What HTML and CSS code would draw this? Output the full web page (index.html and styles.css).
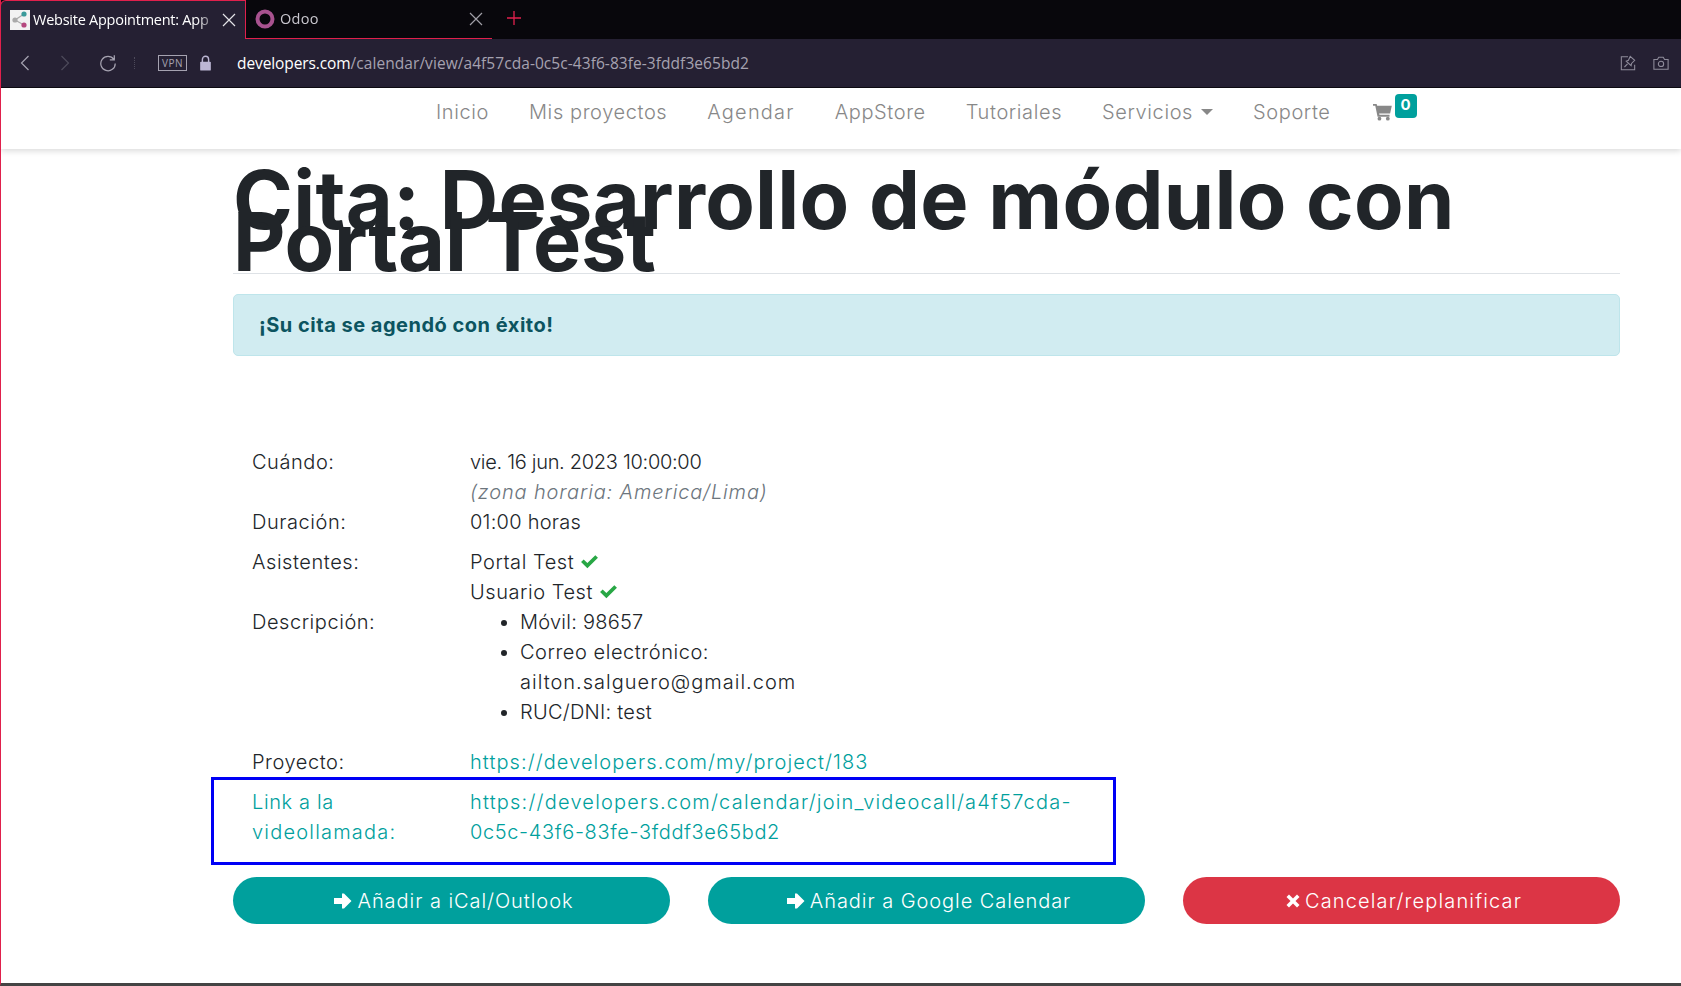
FILE: index.html
```html
<!DOCTYPE html>
<html>
<head>
    <meta charset="UTF-8">
    <title>Website Appointment</title>
    <link rel="stylesheet" href="styles.css">
</head>
<body>
    <div class="tabbar">
        <div class="tab active">
            <svg class="favicon" viewBox="0 0 20 20">
                <rect width="20" height="20" fill="#f2f2f2"/>
                <path d="M5 10 L14 4 M5 10 L14 15" stroke="#aaa" stroke-width="1.2"/>
                <circle cx="5" cy="10" r="2.6" fill="#aaa"/>
                <circle cx="14" cy="4" r="2.6" fill="#3a9a9a"/>
                <circle cx="14" cy="15" r="2.6" fill="#b5487f"/>
            </svg>
            <span class="tab-title">Website Appointment: App</span>
            <svg class="tab-close" viewBox="0 0 14 14"><path d="M1 1 L13 13 M13 1 L1 13"/></svg>
        </div>
        <div class="tab">
            <svg class="favicon" viewBox="0 0 20 20">
                <circle cx="10" cy="10" r="7.5" fill="none" stroke="#a8528f" stroke-width="4"/>
            </svg>
            <span class="tab-title dim">Odoo</span>
            <svg class="tab-close dim" viewBox="0 0 14 14"><path d="M1 1 L13 13 M13 1 L1 13"/></svg>
        </div>
        <svg class="new-tab" viewBox="0 0 16 16"><path d="M8 0 V16 M0 8 H16"/></svg>
    </div>

    <div class="toolbar">
        <svg class="tool-btn" viewBox="0 0 16 20"><path d="M12 2 L4 10 L12 18"/></svg>
        <svg class="tool-btn off" viewBox="0 0 16 20"><path d="M4 2 L12 10 L4 18"/></svg>
        <svg class="tool-btn reload" viewBox="0 0 20 20"><path d="M16.5 6 A8 8 0 1 0 18 10.5 M17 1.5 V6.5 H12"/></svg>
        <span class="tool-sep"></span>
        <span class="vpn">VPN</span>
        <svg class="lock" viewBox="0 0 14 18">
            <path d="M3.5 8 V5 A3.5 3.5 0 0 1 10.5 5 V8" fill="none" stroke="#bcb6d4" stroke-width="1.6"/>
            <rect x="1" y="7.5" width="12" height="10" rx="1" fill="#bcb6d4"/>
        </svg>
        <div class="url"><span class="host">developers.com</span>/calendar/view/a4f57cda-0c5c-43f6-83fe-3fddf3e65bd2</div>
        <svg class="tool-icon" viewBox="0 0 18 18">
            <path d="M9 2 H1.5 V16.5 H16.5 V11"/>
            <path d="M11.5 1.5 L16.5 6 L13 9.5 L12.5 12 L7 7 L9.5 6 Z M8.5 10 L5 13.5"/>
        </svg>
        <svg class="tool-icon" viewBox="0 0 18 16">
            <path d="M1 4 H5 L6.5 1.5 H11.5 L13 4 H17 V15 H1 Z"/>
            <circle cx="9" cy="9" r="3"/>
        </svg>
    </div>

    <nav class="navbar">
        <a class="nav-link">Inicio</a>
        <a class="nav-link">Mis proyectos</a>
        <a class="nav-link wide">Agendar</a>
        <a class="nav-link">AppStore</a>
        <a class="nav-link">Tutoriales</a>
        <a class="nav-link caret">Servicios</a>
        <a class="nav-link">Soporte</a>
        <a class="nav-link cart">
            <svg class="cart-icon" viewBox="0 0 20 18">
                <path d="M0 0.5 H3.8 L4.4 2.5 H19.8 L18 10.5 H6.4 L6.8 12 H17.4 V14 H4.8 L2.4 2.5 H0 Z"/>
                <circle cx="6.8" cy="16" r="2"/>
                <circle cx="15.6" cy="16" r="2"/>
            </svg>
            <span class="badge">0</span>
        </a>
    </nav>

    <main class="content">
        <h1 class="page-title">Cita: Desarrollo de módulo con <span class="title-end">Portal Test</span></h1>
        <div class="alert">¡Su cita se agendó con éxito!</div>

        <div class="details">
            <div class="row">
                <div class="label">Cuándo:</div>
                <div class="value"><span class="digits">vie. 16 jun. 2023 10:00:00</span><br><em class="tz">(zona horaria: America/Lima)</em></div>
            </div>
            <div class="row spaced">
                <div class="label">Duración:</div>
                <div class="value">01:00 horas</div>
            </div>
            <div class="row">
                <div class="label">Asistentes:</div>
                <div class="value roomy">
                    Portal Test <svg class="check" viewBox="0 0 18 14"><path d="M1 7.5 L3.5 5 L7 8.5 L14.5 1 L17 3.5 L7 13.5 Z"/></svg><br>
                    Usuario Test <svg class="check" viewBox="0 0 18 14"><path d="M1 7.5 L3.5 5 L7 8.5 L14.5 1 L17 3.5 L7 13.5 Z"/></svg>
                </div>
            </div>
            <div class="row desc">
                <div class="label">Descripción:</div>
                <ul class="value desc-list">
                    <li>Móvil: 98657</li>
                    <li><span class="roomy">Correo electrónico:</span><br><span class="email">ailton.salguero@gmail.com</span></li>
                    <li>RUC/DNI: test</li>
                </ul>
            </div>
            <div class="row">
                <div class="label">Proyecto:</div>
                <div class="value"><a class="link">https://developers.com/my/project/183</a></div>
            </div>
            <div class="row video">
                <div class="label"><a class="link"><span class="tight">Link a la</span><br>videollamada:</a></div>
                <div class="value"><a class="link">https://developers.com/calendar/join_videocall/a4f57cda-<br><span class="tight">0c5c-43f6-83fe-3fddf3e65bd2</span></a></div>
            </div>
        </div>

        <div class="actions">
            <a class="btn">
                <svg class="btn-icon" viewBox="0 0 18 18"><path d="M0 6 H8 V1.5 L10 1.5 L17.5 9 L10 16.5 H8 V12 H0 Z"/></svg>
                Añadir a iCal/Outlook
            </a>
            <a class="btn">
                <svg class="btn-icon" viewBox="0 0 18 18"><path d="M0 6 H8 V1.5 L10 1.5 L17.5 9 L10 16.5 H8 V12 H0 Z"/></svg>
                Añadir a Google Calendar
            </a>
            <a class="btn danger">
                <svg class="btn-icon small" viewBox="0 0 14 14"><path d="M3 0.5 L7 4.5 L11 0.5 L13.5 3 L9.5 7 L13.5 11 L11 13.5 L7 9.5 L3 13.5 L0.5 11 L4.5 7 L0.5 3 Z"/></svg>
                Cancelar/replanificar
            </a>
        </div>
    </main>
</body>
</html>
```

FILE: styles.css
```css
* {
    box-sizing: border-box;
}

html, body {
    height: 100%;
}

body {
    margin: 0;
    display: flex;
    flex-direction: column;
    overflow: hidden;
    background: #fff;
    color: #212529;
    font-family: Inter, "Liberation Sans", sans-serif;
    font-size: 20px;
    font-weight: 350;
    line-height: 30px;
    letter-spacing: 0.25px;
    border-left: 1px solid #e0204c;
    border-bottom: 3px solid #444;
}

/* browser chrome */
.tabbar {
    display: flex;
    align-items: stretch;
    height: 39px;
    margin-left: -1px;
    background: #08070c;
    font-family: "Open Sans", sans-serif;
    font-size: 14.5px;
    font-weight: 400;
    line-height: 20px;
    letter-spacing: 0;
}

.tab {
    display: flex;
    align-items: center;
    width: 246px;
    padding: 0 9px 0 9px;
    gap: 3px;
    border-bottom: 1px solid #e0204c;
}

.tab.active {
    background: #252033;
    color: #fff;
    border: 1px solid #e0204c;
    border-bottom: none;
    border-top-left-radius: 6px;
}

.favicon {
    width: 20px;
    height: 20px;
    flex: none;
}

.tab-title {
    flex: 1;
    overflow: hidden;
    white-space: nowrap;
    letter-spacing: -0.25px;
    -webkit-mask-image: linear-gradient(to right, #000 88%, transparent 100%);
    mask-image: linear-gradient(to right, #000 88%, transparent 100%);
}

.tab-title.dim {
    margin-left: 2px;
    color: #c9c7cf;
    letter-spacing: 0.3px;
}

.tab-close {
    width: 14px;
    height: 14px;
    flex: none;
    fill: none;
    stroke: #e4e3e8;
    stroke-width: 1.2;
}

.tab-close.dim {
    stroke: #a09ea6;
}

.new-tab {
    width: 14px;
    height: 14px;
    margin: 11px 0 0 15px;
    fill: none;
    stroke: #e0204c;
    stroke-width: 1.5;
}

.toolbar {
    display: flex;
    align-items: center;
    height: 49px;
    margin-left: -1px;
    padding: 0 12px 1px 18px;
    background: #252033;
    border-bottom: 1px solid #0d0b12;
    font-family: "Open Sans", sans-serif;
    font-size: 15.5px;
    font-weight: 400;
    letter-spacing: 0;
}

.tool-btn {
    width: 14px;
    height: 18px;
    margin-right: 26px;
    fill: none;
    stroke: #a5a2b0;
    stroke-width: 1.4;
}

.tool-btn.off {
    stroke: #4d4a5a;
}

.tool-btn.reload {
    width: 18px;
    margin: 0 17px 0 1px;
}

.tool-sep {
    width: 1px;
    height: 12px;
    margin-right: 23px;
    border-left: 1px dotted #4d4a5a;
}

.vpn {
    width: 29px;
    height: 16px;
    margin-right: 12px;
    border: 1px solid #a5a2b0;
    color: #a5a2b0;
    font-size: 10px;
    line-height: 14px;
    letter-spacing: 0.5px;
    text-align: center;
}

.lock {
    width: 13px;
    height: 16px;
    margin-right: 25px;
}

.url {
    flex: 1;
    color: #a5a2b0;
    white-space: nowrap;
    letter-spacing: 0.06px;
}

.host {
    color: #fff;
    letter-spacing: -0.1px;
}

.tool-icon {
    width: 16px;
    height: 16px;
    margin-left: 17px;
    fill: none;
    stroke: #8f8c9b;
    stroke-width: 1.2;
}

/* site nav */
.navbar {
    display: flex;
    align-items: flex-start;
    gap: 40px;
    height: 61px;
    padding: 9px 0 0 435px;
    background: #fff;
    box-shadow: 0 2px 6px rgba(0,0,0,0.15);
    position: relative;
}

.nav-link {
    color: #888;
    letter-spacing: 0.6px;
    white-space: nowrap;
}

.nav-link.wide {
    letter-spacing: 1.2px;
}

.caret::after {
    content: "";
    display: inline-block;
    margin-left: 8px;
    vertical-align: 4px;
    border-top: 6px solid #888;
    border-left: 6px solid transparent;
    border-right: 6px solid transparent;
}

.cart {
    display: flex;
    align-items: flex-start;
    margin-left: 2px;
}

.cart-icon {
    width: 19px;
    height: 18px;
    margin-top: 6px;
    fill: #888;
}

.badge {
    width: 22px;
    height: 24px;
    margin: -3px 0 0 3px;
    border-radius: 4px;
    background: #00a09d;
    color: #fff;
    font-size: 15px;
    font-weight: 700;
    line-height: 22px;
    text-align: center;
    letter-spacing: 0;
}

/* page */
.content {
    flex: 1;
    padding: 0 61px 0 232px;
}

.page-title {
    margin: 30px 0 0;
    padding-bottom: 10px;
    border-bottom: 1px solid #dee2e6;
    font-size: 81px;
    font-weight: 700;
    line-height: 42px;
    letter-spacing: 0.27px;
}

.title-end {
    letter-spacing: -0.25px;
}

.alert {
    height: 62px;
    margin-top: 20px;
    padding: 0 25px;
    background: #d1ecf1;
    border: 1px solid #bee5eb;
    border-radius: 5px;
    color: #0c5460;
    font-weight: 700;
    line-height: 60px;
    letter-spacing: 0.5px;
}

.details {
    margin-top: 91px;
    width: 880px;
}

.row {
    display: flex;
    padding-left: 19px;
}

.row.spaced {
    padding-bottom: 10px;
}

.label {
    width: 218px;
    flex: none;
    letter-spacing: 0.55px;
}

.value {
    flex: 1;
}

.digits {
    letter-spacing: -0.3px;
}

.tz {
    color: #6c757d;
    letter-spacing: 0.85px;
}

.check {
    width: 19px;
    height: 15px;
    fill: #28a745;
}

.desc {
    padding-bottom: 20px;
}

.desc-list {
    margin: 0;
    padding: 0 0 0 50px;
}

.roomy {
    letter-spacing: 0.55px;
}

.email {
    letter-spacing: 1px;
}

.link {
    color: #00a09d;
    letter-spacing: 1.07px;
}

.video .link {
    letter-spacing: 1.2px;
}

.video .tight {
    letter-spacing: 0.63px;
}

.row.video {
    width: 905px;
    margin: 0 0 0 -22px;
    padding: 7px 0 15px 38px;
    border: 3px solid #0000f5;
}

.actions {
    display: grid;
    grid-template-columns: repeat(3, 1fr);
    gap: 38px;
    margin-top: 12px;
}

.btn {
    display: flex;
    align-items: center;
    justify-content: center;
    gap: 5px;
    height: 47px;
    padding-left: 5px;
    border-radius: 24px;
    background: #00a09d;
    color: #fff;
    letter-spacing: 0.95px;
}

.btn.danger {
    background: #dc3545;
    letter-spacing: 1.15px;
}

.btn-icon {
    width: 18px;
    height: 18px;
    fill: #fff;
}

.btn-icon.small {
    width: 14px;
    height: 14px;
}
```
